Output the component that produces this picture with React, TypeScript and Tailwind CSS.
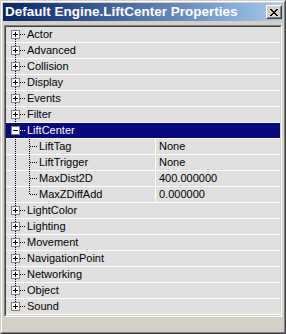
import React from "react";

type Row = { label: string; kind: "top" | "child"; value?: string; expanded?: boolean; selected?: boolean; lastChild?: boolean };

const rows: Row[] = [
  { label: "Actor", kind: "top" },
  { label: "Advanced", kind: "top" },
  { label: "Collision", kind: "top" },
  { label: "Display", kind: "top" },
  { label: "Events", kind: "top" },
  { label: "Filter", kind: "top" },
  { label: "LiftCenter", kind: "top", expanded: true, selected: true },
  { label: "LiftTag", kind: "child", value: "None" },
  { label: "LiftTrigger", kind: "child", value: "None" },
  { label: "MaxDist2D", kind: "child", value: "400.000000" },
  { label: "MaxZDiffAdd", kind: "child", value: "0.000000", lastChild: true },
  { label: "LightColor", kind: "top" },
  { label: "Lighting", kind: "top" },
  { label: "Movement", kind: "top" },
  { label: "NavigationPoint", kind: "top" },
  { label: "Networking", kind: "top" },
  { label: "Object", kind: "top" },
  { label: "Sound", kind: "top" },
];

const H = 15;

function vDots(x: number, y0: number, y1: number, color: string, key: string) {
  const out: React.ReactElement[] = [];
  for (let y = y0; y <= y1; y++) {
    if (y % 2 === 0) out.push(<rect key={key + y} x={x} y={y} width={1} height={1} fill={color} />);
  }
  return out;
}
function hDots(y: number, x0: number, x1: number, color: string, key: string) {
  const out: React.ReactElement[] = [];
  for (let x = x0; x <= x1; x++) {
    if (x % 2 === 0) out.push(<rect key={key + x} x={x} y={y} width={1} height={1} fill={color} />);
  }
  return out;
}

function Gutter({ row, first, last }: { row: Row; first: boolean; last: boolean }) {
  const w = row.kind === "top" ? 21 : 33;
  const dot = row.selected ? "#ffffff" : "#000000";
  const els: React.ReactElement[] = [];
  if (row.kind === "top") {
    if (!first) els.push(...vDots(9, 0, 2, "#000000", "a"));
    if (!last) els.push(...vDots(9, 12, H - 1, "#000000", "b"));
    els.push(...hDots(7, 14, 19, dot, "h"));
    els.push(<rect key="box" x={5.5} y={3.5} width={8} height={8} fill="#ffffff" stroke="#808080" strokeWidth={1} />);
    els.push(<rect key="minus" x={7} y={7} width={5} height={1} fill="#000000" />);
    if (!row.expanded) els.push(<rect key="plus" x={9} y={5} width={1} height={5} fill="#000000" />);
  } else {
    els.push(...vDots(9, 0, H - 1, "#000000", "a"));
    els.push(...vDots(23, 0, row.lastChild ? 7 : H - 1, "#000000", "c"));
    els.push(...hDots(7, 24, 31, "#000000", "h"));
  }
  return (
    <svg width={w} height={H} className="shrink-0" shapeRendering="crispEdges">
      {els}
    </svg>
  );
}

export default function App() {
  return (
    <div
      className="w-[286px] h-[334px] border border-t-[#d4d0c8] border-l-[#d4d0c8] border-r-[#404040] border-b-[#404040]"
      style={{ fontFamily: '"Liberation Sans", Arial, sans-serif' }}
    >
      <div className="w-full h-full border border-t-white border-l-white border-r-[#808080] border-b-[#808080] bg-[#d4d0c8] p-px flex flex-col">
        <div className="h-[18px] flex items-center justify-between bg-gradient-to-r from-[#0a246a] to-[#a6caf0] pl-[2px] pr-[1px]">
          <span className="text-white font-bold text-[13.5px] leading-none whitespace-nowrap">
            Default Engine.LiftCenter Properties
          </span>
          <div className="w-[16px] h-[14px] border border-t-white border-l-white border-r-[#404040] border-b-[#404040] bg-[#d4d0c8]">
            <div className="w-full h-full border border-t-[#d4d0c8] border-l-[#d4d0c8] border-r-[#808080] border-b-[#808080] flex items-center justify-center">
              <svg width="8" height="7" shapeRendering="crispEdges">
                <path d="M0 0h2v1h-2zM6 0h2v1h-2zM1 1h2v1h-2zM5 1h2v1h-2zM2 2h4v1h-4zM3 3h2v1h-2zM2 4h4v1h-4zM1 5h2v1h-2zM5 5h2v1h-2zM0 6h2v1h-2zM6 6h2v1h-2z" fill="#000" />
              </svg>
            </div>
          </div>
        </div>
        <div className="mt-[4px] mx-[1px] h-[292px] border border-t-[#808080] border-l-[#808080] border-r-white border-b-white">
          <div className="w-full h-full border border-t-[#404040] border-l-[#404040] border-r-[#d4d0c8] border-b-[#d4d0c8] bg-[#e0e0e0] overflow-hidden">
            {rows.map((r, i) => {
              const firstTop = i === 0;
              const lastTop = i === rows.length - 1;
              return (
                <div
                  key={r.label}
                  className={`h-[16px] flex border-b border-white text-[11px] leading-[15px] ${
                    r.selected ? "bg-[#0a0a80] text-white" : "text-black"
                  }`}
                >
                  <Gutter row={r} first={firstTop} last={lastTop} />
                  {r.kind === "top" ? (
                    <span className="whitespace-nowrap">{r.label}</span>
                  ) : (
                    <>
                      <span className="w-[117px] shrink-0 whitespace-nowrap border-r border-white">{r.label}</span>
                      <span className="pl-[3px] whitespace-nowrap">{r.value}</span>
                    </>
                  )}
                </div>
              );
            })}
          </div>
        </div>
      </div>
    </div>
  );
}
